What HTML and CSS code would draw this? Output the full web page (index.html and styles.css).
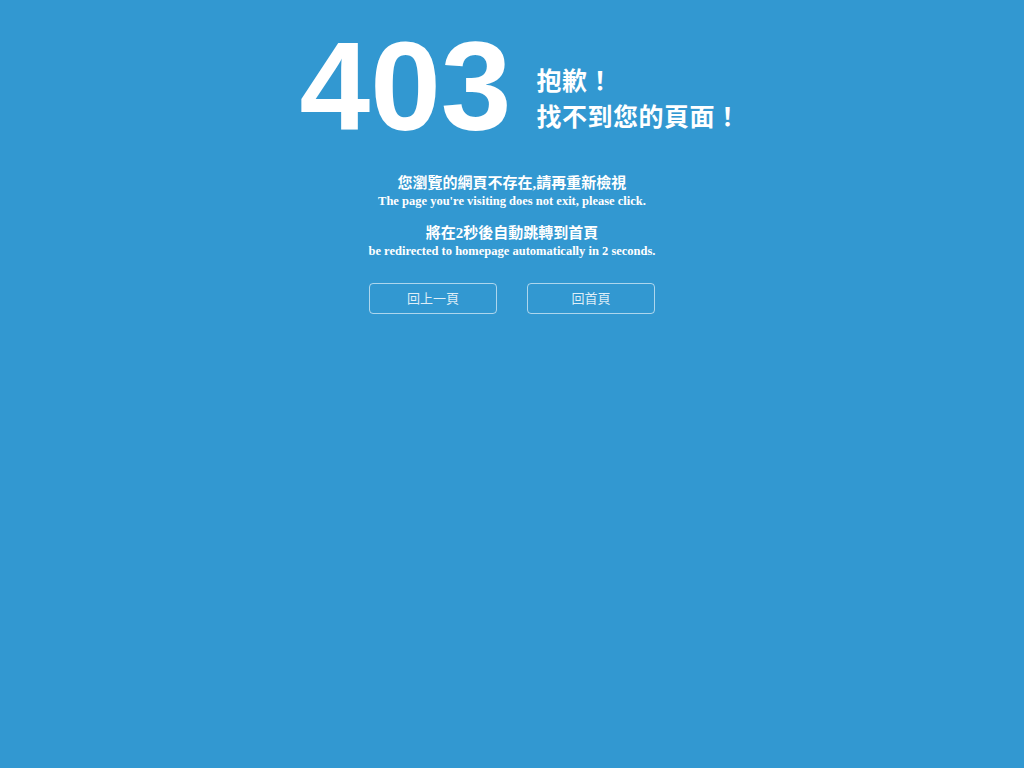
FILE: index.html
```html
<!DOCTYPE html>
<html lang="zh-Hant">
<head>
<meta charset="utf-8">
<title>403</title>
<link rel="stylesheet" href="styles.css">
</head>
<body>
<div class="page">
  <div class="head">
    <div class="code">403</div>
    <div class="sorry">
      <div>抱歉！</div>
      <div>找不到您的頁面！</div>
    </div>
  </div>
  <div class="msg">
    <div class="zh">您瀏覽的網頁不存在,請再重新檢視</div>
    <div class="en">The page you're visiting does not exit, please click.</div>
  </div>
  <div class="msg msg2">
    <div class="zh">將在2秒後自動跳轉到首頁</div>
    <div class="en">be redirected to homepage automatically in 2 seconds.</div>
  </div>
  <div class="btns">
    <a class="btn" href="#">回上一頁</a>
    <a class="btn" href="#">回首頁</a>
  </div>
</div>
</body>
</html>
```
FILE: styles.css
```css
html, body {
  margin: 0;
  padding: 0;
  height: 100%;
  background: #3298d1;
}
body {
  color: #fff;
  font-family: "Liberation Sans", "Noto Sans CJK TC", sans-serif;
}
.page {
  display: flex;
  flex-direction: column;
  align-items: center;
  padding-top: 22px;
}
.head {
  display: flex;
  align-items: center;
  gap: 25px;
  margin-left: 16px;
}
.code {
  font-size: 127px;
  font-weight: bold;
  line-height: 128px;
}
.sorry {
  font-size: 25px;
  font-weight: bold;
  line-height: 36px;
  margin-top: 26px;
  letter-spacing: 0.5px;
}
.msg {
  margin-top: 23px;
  text-align: center;
}
.msg2 {
  margin-top: 14px;
}
.zh {
  font-size: 15px;
  font-weight: bold;
  line-height: 20px;
  font-family: "Liberation Serif", "Noto Sans CJK TC", serif;
}
.en {
  font-family: "Liberation Serif", serif;
  font-size: 12.5px;
  font-weight: bold;
  line-height: 16px;
}
.btns {
  display: flex;
  gap: 30px;
  margin-top: 24px;
}
.btn {
  box-sizing: border-box;
  width: 128px;
  height: 31px;
  padding-bottom: 3px;
  border: 1px solid rgba(255,255,255,0.6);
  border-radius: 4px;
  color: rgba(255,255,255,0.85);
  text-decoration: none;
  font-size: 13px;
  display: flex;
  align-items: center;
  justify-content: center;
}
```
